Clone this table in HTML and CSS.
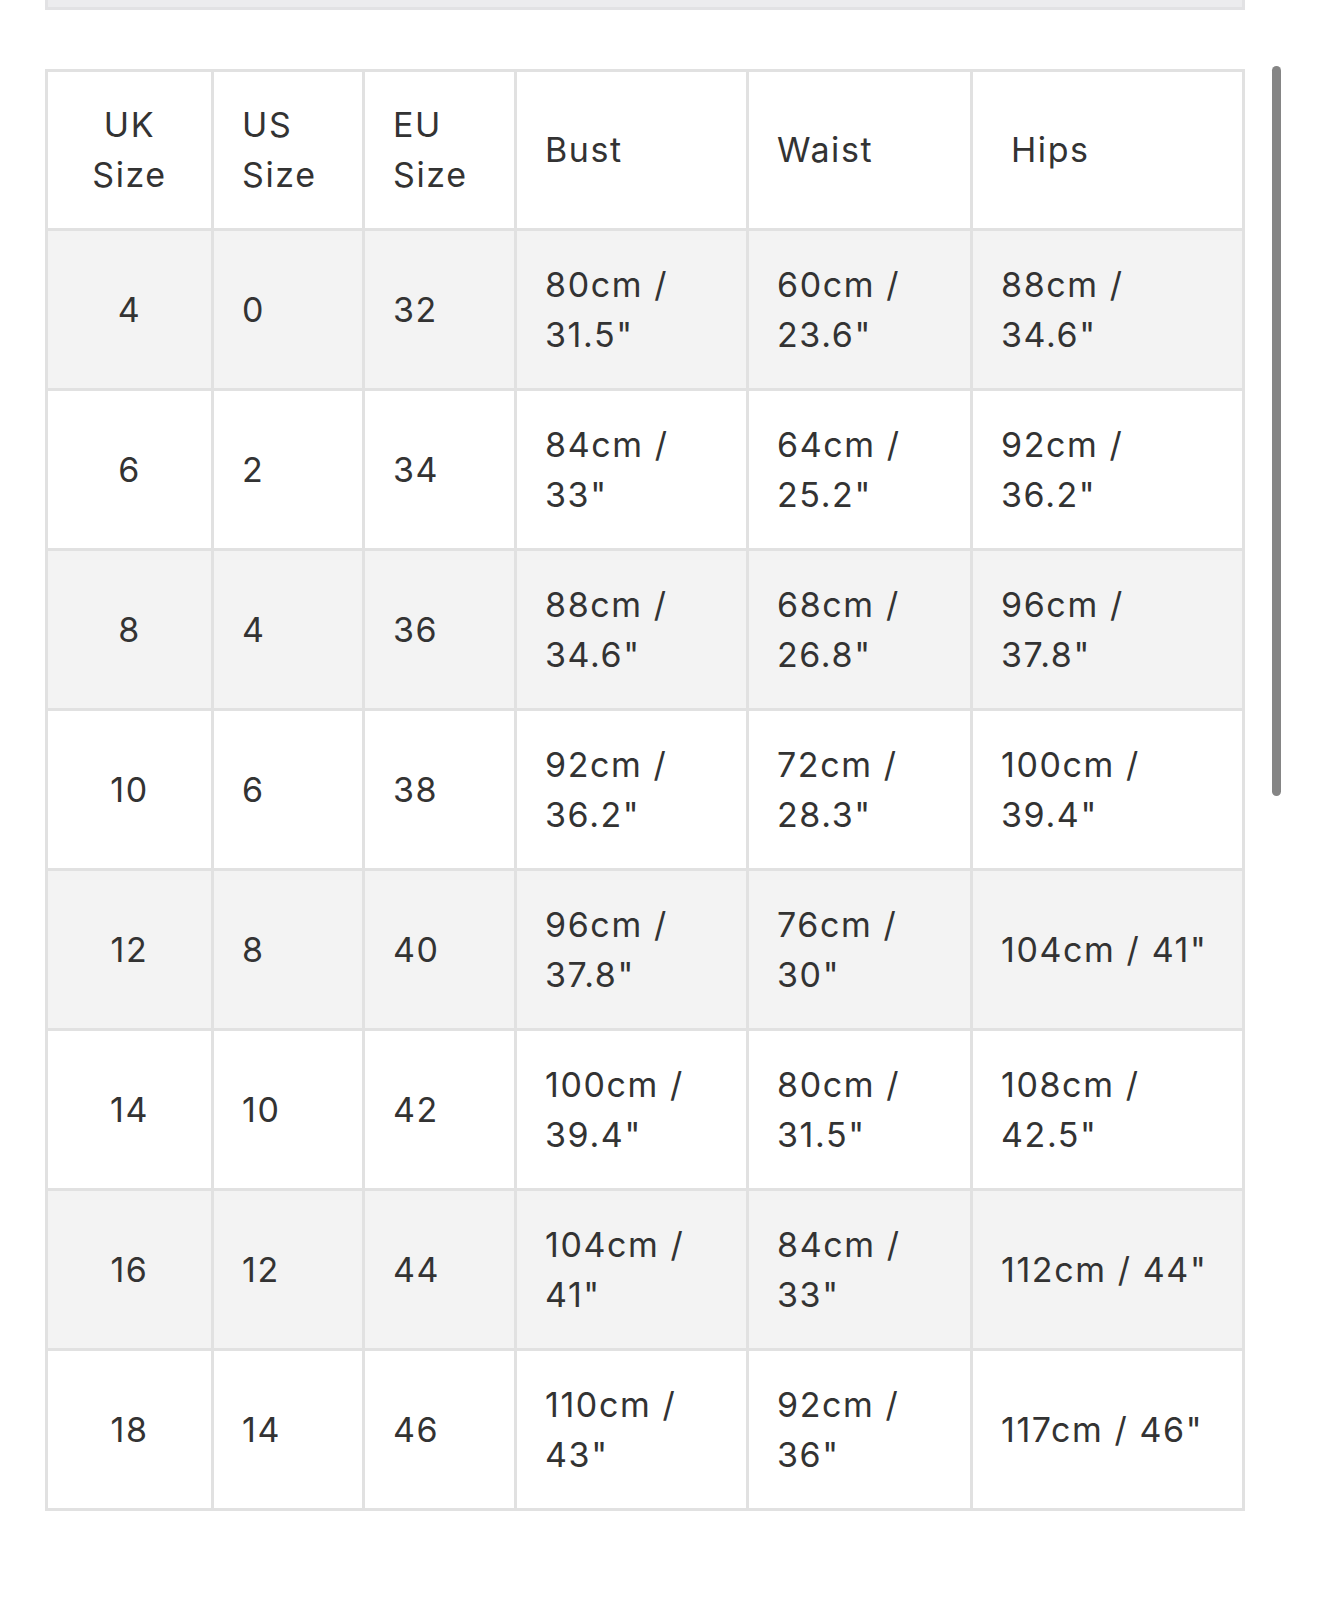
FILE: index.html
```html
<!DOCTYPE html>
<html>
<head>
<meta charset="utf-8">
<link rel="stylesheet" href="styles.css">
</head>
<body>
<div class="page">
  <div class="topbar"></div>
  <table class="sizes">
    <colgroup>
      <col class="c1"><col class="c2"><col class="c3"><col class="c4"><col class="c5"><col class="c6">
    </colgroup>
    <thead>
      <tr>
        <th class="center">UK<br>Size</th>
        <th>US<br>Size</th>
        <th>EU<br>Size</th>
        <th>Bust</th>
        <th>Waist</th>
        <th class="hips">Hips</th>
      </tr>
    </thead>
    <tbody>
      <tr><td class="center">4</td><td>0</td><td>32</td><td>80cm /<br>31.5"</td><td>60cm /<br>23.6"</td><td>88cm /<br>34.6"</td></tr>
      <tr><td class="center">6</td><td>2</td><td>34</td><td>84cm /<br>33"</td><td>64cm /<br>25.2"</td><td>92cm /<br>36.2"</td></tr>
      <tr><td class="center">8</td><td>4</td><td>36</td><td>88cm /<br>34.6"</td><td>68cm /<br>26.8"</td><td>96cm /<br>37.8"</td></tr>
      <tr><td class="center">10</td><td>6</td><td>38</td><td>92cm /<br>36.2"</td><td>72cm /<br>28.3"</td><td>100cm /<br>39.4"</td></tr>
      <tr><td class="center">12</td><td>8</td><td>40</td><td>96cm /<br>37.8"</td><td>76cm /<br>30"</td><td>104cm / 41"</td></tr>
      <tr><td class="center">14</td><td>10</td><td>42</td><td>100cm /<br>39.4"</td><td>80cm /<br>31.5"</td><td>108cm /<br>42.5"</td></tr>
      <tr><td class="center">16</td><td>12</td><td>44</td><td>104cm /<br>41"</td><td>84cm /<br>33"</td><td>112cm / 44"</td></tr>
      <tr><td class="center">18</td><td>14</td><td>46</td><td>110cm /<br>43"</td><td>92cm /<br>36"</td><td>117cm / 46"</td></tr>
    </tbody>
  </table>
  <div class="scrollbar"></div>
</div>
</body>
</html>
```
FILE: styles.css
```css
html, body {
  margin: 0;
  padding: 0;
  background: #ffffff;
}
.page {
  position: relative;
  width: 1320px;
  min-height: 1604px;
  padding: 0 0 0 45px;
  box-sizing: border-box;
  font-family: "Inter", "Liberation Sans", sans-serif;
  color: #333333;
}
.topbar {
  width: 1200px;
  height: 10px;
  box-sizing: border-box;
  background: #ececee;
  border: 3px solid #e2e2e4;
  border-top: none;
}
.sizes {
  margin-top: 59px;
  width: 1200px;
  border-collapse: collapse;
  table-layout: fixed;
  border: 3px solid #e1e1e1;
}
.c1 { width: 166px; }
.c2 { width: 151px; }
.c3 { width: 152px; }
.c4 { width: 232px; }
.c5 { width: 224px; }
.c6 { width: 272px; }
.sizes th,
.sizes td {
  border: 3px solid #e1e1e1;
  padding: 0 0 0 28px;
  text-align: left;
  vertical-align: middle;
  font-weight: 400;
  font-size: 34px;
  line-height: 50px;
  letter-spacing: 1.6px;
  white-space: nowrap;
}
.sizes thead tr { height: 159px; }
.sizes tbody tr { height: 160px; }
.sizes tbody tr:nth-child(odd) { background: #f3f3f3; }
.sizes th.center,
.sizes td.center {
  text-align: center;
  padding: 0;
}
.sizes th.hips { padding-left: 38px; }
.scrollbar {
  position: absolute;
  left: 1272px;
  top: 66px;
  width: 9px;
  height: 730px;
  border-radius: 5px;
  background: #858585;
}
```
